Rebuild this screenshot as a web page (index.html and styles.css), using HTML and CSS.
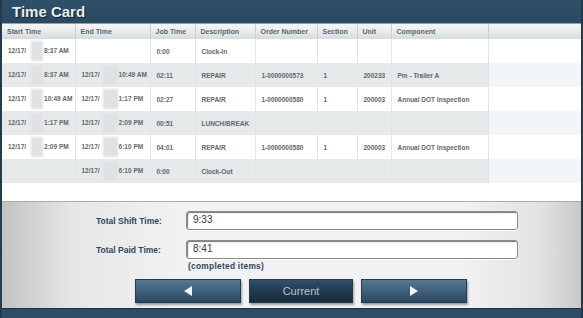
FILE: index.html
```html
<!DOCTYPE html>
<html>
    <head>
        <title>Time Card</title>
        <link rel="stylesheet" href="styles.css">
    </head>
    <body>
        <div class="frame">
            <div class="titlebar">Time Card</div>
            <div class="grid">
                <table>
                    <colgroup>
                        <col class="c-start"><col class="c-end"><col class="c-job"><col class="c-desc">
                        <col class="c-order"><col class="c-sect"><col class="c-unit"><col class="c-comp"><col>
                    </colgroup>
                    <thead>
                        <tr>
                            <th>Start Time</th><th>End Time</th><th>Job Time</th><th>Description</th>
                            <th>Order Number</th><th>Section</th><th>Unit</th><th>Component</th><th></th>
                        </tr>
                    </thead>
                    <tbody>
                        <tr>
                            <td>12/17/<span class="blur"></span>8:37 AM</td><td></td><td>0:00</td><td>Clock-In</td>
                            <td></td><td></td><td></td><td></td><td class="fill"></td>
                        </tr>
                        <tr class="alt">
                            <td>12/17/<span class="blur"></span>8:37 AM</td><td>12/17/<span class="blur wide"></span>10:49 AM</td><td>02:11</td><td>REPAIR</td>
                            <td>1-0000000573</td><td>1</td><td>200233</td><td>Pm - Trailer A</td><td class="fill"></td>
                        </tr>
                        <tr>
                            <td>12/17/<span class="blur"></span>10:49 AM</td><td>12/17/<span class="blur wide"></span>1:17 PM</td><td>02:27</td><td>REPAIR</td>
                            <td>1-0000000580</td><td>1</td><td>200003</td><td>Annual DOT Inspection</td><td class="fill"></td>
                        </tr>
                        <tr class="alt">
                            <td>12/17/<span class="blur"></span>1:17 PM</td><td>12/17/<span class="blur wide"></span>2:09 PM</td><td>00:51</td><td>LUNCH/BREAK</td>
                            <td></td><td></td><td></td><td></td><td class="fill"></td>
                        </tr>
                        <tr>
                            <td>12/17/<span class="blur"></span>2:09 PM</td><td>12/17/<span class="blur wide"></span>6:10 PM</td><td>04:01</td><td>REPAIR</td>
                            <td>1-0000000580</td><td>1</td><td>200003</td><td>Annual DOT Inspection</td><td class="fill"></td>
                        </tr>
                        <tr class="alt">
                            <td></td><td>12/17/<span class="blur wide"></span>6:10 PM</td><td>0:00</td><td>Clock-Out</td>
                            <td></td><td></td><td></td><td></td><td class="fill"></td>
                        </tr>
                    </tbody>
                </table>
            </div>
            <div class="totals">
                <div class="fields">
                    <label>Total Shift Time:</label>
                    <div class="box">9:33</div>
                    <label>Total Paid Time:</label>
                    <div class="box">8:41</div>
                    <span></span>
                    <div class="note">(completed items)</div>
                </div>
                <div class="buttons">
                    <button class="btn"><span class="tri left"></span></button>
                    <button class="btn current">Current</button>
                    <button class="btn"><span class="tri right"></span></button>
                </div>
            </div>
            <div class="footbar"></div>
        </div>
    </body>
</html>
```
FILE: styles.css
```css
body {
    margin: 0;
    padding: 0;
    font-family: "Liberation Sans", Arial, sans-serif;
    background: #fff;
}

.frame {
    width: 579px;
    height: 318px;
    border-left: 2px solid #26394a;
    border-right: 2px solid #26394a;
    display: flex;
    flex-direction: column;
    overflow: hidden;
}

.titlebar {
    flex-shrink: 0;
    height: 24px;
    box-sizing: border-box;
    padding: 3px 0 0 10px;
    background: linear-gradient(#2f5069, #2a4a62);
    color: #e8eef2;
    font-size: 15px;
    font-weight: bold;
    text-shadow: 1px 1px 1px #10202c;
    border-bottom: 1px solid #8ea2b0;
}

.grid {
    flex-shrink: 0;
    height: 177px;
    background: #fff;
    border-bottom: 1px solid #a6adb2;
}

table {
    width: 579px;
    border-collapse: collapse;
    table-layout: fixed;
}

.c-start { width: 73px; }
.c-end { width: 75px; }
.c-job { width: 45px; }
.c-desc { width: 60px; }
.c-order { width: 62px; }
.c-sect { width: 40px; }
.c-unit { width: 34px; }
.c-comp { width: 97px; }

th {
    height: 15px;
    padding: 0 0 0 5px;
    text-align: left;
    font-size: 7px;
    font-weight: bold;
    color: #5a6770;
    background: linear-gradient(#f6f7f7, #e4e8ea 60%, #d4dade);
    border-right: 1px solid #c9d0d4;
    white-space: nowrap;
    overflow: hidden;
}

th:last-child {
    border-right: none;
}

td {
    height: 24px;
    padding: 0 0 0 6px;
    font-size: 6.5px;
    font-weight: bold;
    color: #63676b;
    border-right: 1px solid #e2e4e5;
    white-space: nowrap;
    overflow: hidden;
}

tr.alt td {
    background: #e6e9ea;
}

td.fill {
    border-right: none;
}

tr.alt td.fill {
    background: #f2f6f9;
}

.blur {
    display: inline-block;
    width: 12px;
    height: 20px;
    margin: 0 1px 0 5px;
    vertical-align: middle;
    background: #e0e1e2;
    filter: blur(1.2px);
}

.blur.wide {
    width: 15px;
    margin: 0 1px 0 3px;
}

.totals {
    flex: 1;
    background: linear-gradient(90deg, #c2c2c2, #e6e6e6 12%, #f1f1f1 30%, #f1f1f1 80%, #e2e2e2 93%, #c9c9c9);
    padding-top: 9px;
}

.fields {
    display: grid;
    grid-template-columns: 90px 332px;
    grid-template-rows: 19px 19px 10px;
    row-gap: 10px;
    margin-left: 94px;
    align-items: center;
}

label {
    font-size: 8.5px;
    font-weight: bold;
    color: #2c4760;
}

.box {
    height: 19px;
    box-sizing: border-box;
    padding: 2px 0 0 6px;
    background: #fff;
    border: 1px solid #8a8a8a;
    border-radius: 3px;
    box-shadow: inset 1px 1px 1px #777, 0 1px 0 #fff;
    font-size: 10px;
    color: #3a3a3a;
}

.note {
    align-self: start;
    margin-top: -8px;
    padding-left: 2px;
    font-size: 8.3px;
    letter-spacing: 0.3px;
    font-weight: bold;
    color: #2c4760;
}

.buttons {
    display: flex;
    gap: 8px;
    margin: 0 0 0 133px;
}

.btn {
    width: 106px;
    height: 24px;
    border: 1px solid #243a4c;
    background: linear-gradient(#587892, #3f5f78 50%, #2c4a61);
    box-shadow: 1px 2px 2px rgba(0, 0, 0, 0.35);
    display: flex;
    align-items: center;
    justify-content: center;
    padding: 0;
    font-family: "Liberation Sans", Arial, sans-serif;
}

.btn.current {
    width: 104px;
    background: linear-gradient(#34506a, #223a50 50%, #172c3d);
    color: #b9c4cc;
    font-size: 11px;
}

.tri {
    width: 0;
    height: 0;
    border-top: 5px solid transparent;
    border-bottom: 5px solid transparent;
}

.tri.left {
    border-right: 8px solid #f4f6f8;
}

.tri.right {
    border-left: 8px solid #f4f6f8;
}

.footbar {
    flex-shrink: 0;
    height: 10px;
    box-sizing: border-box;
    background: #2e4c64;
    border-top: 1px solid #1c3040;
}
```
